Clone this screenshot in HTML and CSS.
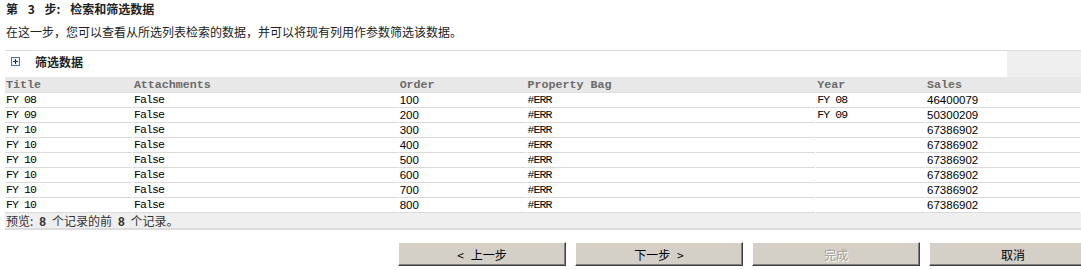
FILE: index.html
```html
<!DOCTYPE html>
<html>
<head lang="zh-CN">
    <meta charset="UTF-8">
    <title>检索和筛选数据</title>
    <link rel="stylesheet" href="styles.css">
</head>
<body>
<div class="page">
    <!--步骤标题-->
    <h1 class="step">第 3 步: 检索和筛选数据</h1>
    <p class="desc">在这一步，您可以查看从所选列表检索的数据，并可以将现有列用作参数筛选该数据。</p>

    <!--筛选区-->
    <div class="filter">
        <div class="filter-head">
            <svg class="expand" width="9" height="9" viewBox="0 0 9 9">
                <rect x="0.5" y="0.5" width="8" height="8" fill="#eef2f8" stroke="#55709a"/>
                <path d="M2 4.5h5M4.5 2v5" stroke="#1c2f5c" stroke-width="1"/>
            </svg>
            <span>筛选数据</span>
        </div>
        <div class="filter-side"></div>
    </div>

    <!--数据预览-->
    <table class="grid">
        <colgroup>
            <col style="width: 127px">
            <col style="width: 265px">
            <col style="width: 127px">
            <col style="width: 289px">
            <col style="width: 109px">
            <col style="width: 154px">
        </colgroup>
        <tr>
            <th>Title</th><th>Attachments</th><th>Order</th><th>Property Bag</th><th>Year</th><th>Sales</th>
        </tr>
        <tr><td>FY 08</td><td>False</td><td class="num">100</td><td>#ERR</td><td>FY 08</td><td class="num">46400079</td></tr>
        <tr><td>FY 09</td><td>False</td><td class="num">200</td><td>#ERR</td><td>FY 09</td><td class="num">50300209</td></tr>
        <tr><td>FY 10</td><td>False</td><td class="num">300</td><td>#ERR</td><td></td><td class="num">67386902</td></tr>
        <tr><td>FY 10</td><td>False</td><td class="num">400</td><td>#ERR</td><td></td><td class="num">67386902</td></tr>
        <tr><td>FY 10</td><td>False</td><td class="num">500</td><td>#ERR</td><td></td><td class="num">67386902</td></tr>
        <tr><td>FY 10</td><td>False</td><td class="num">600</td><td>#ERR</td><td></td><td class="num">67386902</td></tr>
        <tr><td>FY 10</td><td>False</td><td class="num">700</td><td>#ERR</td><td></td><td class="num">67386902</td></tr>
        <tr><td>FY 10</td><td>False</td><td class="num">800</td><td>#ERR</td><td></td><td class="num">67386902</td></tr>
    </table>
    <div class="preview">预览: <b>8</b> 个记录的前 <b>8</b> 个记录。</div>

    <!--按钮-->
    <div class="actions">
        <button class="btn">&lt; 上一步</button>
        <button class="btn">下一步 &gt;</button>
        <button class="btn" disabled>完成</button>
        <button class="btn">取消</button>
    </div>
</div>
</body>
</html>
```

FILE: styles.css
```css
/*页面*/
body{
    margin: 0;
    background-color: #fff;
    font-family: "Noto Sans CJK SC", "Liberation Sans", sans-serif;
    font-size: 12px;
    color: #222;
}
.page{
    width: 1081px;
    height: 270px;
    overflow: hidden;
}
/*步骤标题*/
.step{
    margin: 0;
    padding-left: 6px;
    height: 18px;
    line-height: 18px;
    font-size: 12px;
    font-weight: bold;
    color: #222;
    word-spacing: 7px;
}
.desc{
    margin: 5px 0 0;
    padding-left: 6px;
    height: 18px;
    line-height: 18px;
    color: #222;
}
/*筛选区*/
.filter{
    display: flex;
    margin: 9px 0 0 5px;
    height: 26px;
    border-top: 1px solid #dcdcdc;
}
.filter-head{
    flex: 1;
    display: flex;
    align-items: center;
    padding: 0 0 5px 6px;
    font-weight: bold;
    color: #222;
}
.expand{
    margin-right: 15px;
}
.filter-side{
    width: 74px;
    background-color: #efefef;
}
/*数据表*/
.grid{
    margin-left: 4px;
    table-layout: fixed;
    border-collapse: separate;
    border-spacing: 1px 0;
    font-family: "Liberation Mono", monospace;
}
.grid th{
    height: 15px;
    padding: 0 0 0 1px;
    background-color: #e8e8e8;
    box-shadow: 1px 0 0 #e8e8e8;
    border-bottom: 1px solid #e0e0e0;
    text-align: left;
    font-size: 11.67px;
    font-weight: bold;
    color: #6a6a6a;
    line-height: 14px;
}
.grid td{
    height: 14px;
    padding: 0 0 0 1px;
    border-bottom: 1px solid #dadada;
    font-size: 11.5px;
    letter-spacing: -0.9px;
    line-height: 14px;
    color: #000;
    white-space: nowrap;
}
.grid td.num{
    font-family: "Liberation Sans", sans-serif;
    letter-spacing: 0;
}
/*预览行*/
.preview{
    margin-left: 5px;
    height: 15px;
    line-height: 15px;
    padding-left: 1px;
    background-color: #efefef;
    border-bottom: 2px solid #dcdcdc;
    color: #333;
    word-spacing: 3px;
}
.preview b{
    font-family: "Liberation Mono", monospace;
}
/*按钮*/
.actions{
    display: flex;
    gap: 9px;
    margin: 12px 0 0 398px;
}
.btn{
    flex: none;
    width: 168px;
    height: 24px;
    padding: 0;
    border: 1px solid;
    border-color: #fff #404040 #404040 #fff;
    box-shadow: inset -1px -1px 0 #808080;
    background-color: #d4d0c8;
    font-family: "Noto Sans CJK SC", "Liberation Sans", sans-serif;
    font-size: 12px;
    color: #000;
    word-spacing: 4px;
}
.btn:disabled{
    color: #a09d97;
    text-shadow: 1px 1px 0 #fff;
}
```
